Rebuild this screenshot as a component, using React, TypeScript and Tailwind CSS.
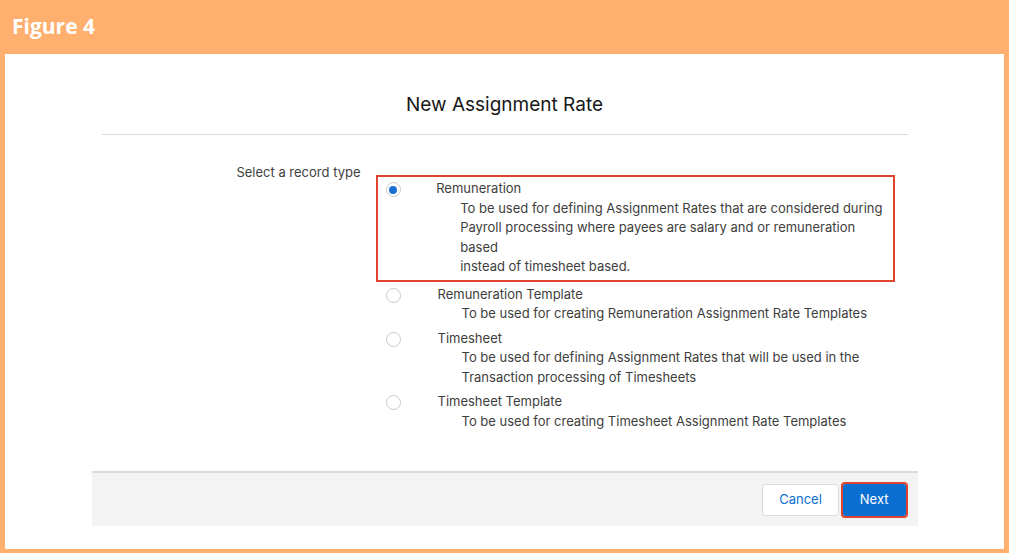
import React from "react";

const items = [
  { t: "Remuneration", d: ["To be used for defining Assignment Rates that are considered during", "Payroll processing where payees are salary and or remuneration based", "instead of timesheet based."], sel: true },
  { t: "Remuneration Template", d: ["To be used for creating Remuneration Assignment Rate Templates"] },
  { t: "Timesheet", d: ["To be used for defining Assignment Rates that will be used in the", "Transaction processing of Timesheets"] },
  { t: "Timesheet Template", d: ["To be used for creating Timesheet Assignment Rate Templates"] },
];

export default function App() {
  return (
    <div className="w-[1009px] h-[553px] bg-[#ffb06e] flex flex-col overflow-hidden" style={{ fontFamily: "Inter, 'Liberation Sans', sans-serif" }}>
      <div className="h-[54px] flex items-center pl-[12px] text-white text-[21px] font-bold" style={{ fontFamily: "'Open Sans', sans-serif" }}>Figure 4</div>
      <div className="mx-[5px] mb-[4px] flex-1 bg-white flex flex-col items-center">
        <div className="w-[806px] border-b border-[#dddbda] h-[81px] flex items-end justify-center pb-[15px] text-[19px] text-[#181818]">New Assignment Rate</div>
        <div className="w-[826px] flex-1 flex text-[13px] text-[#3e3e3c] leading-[19.5px]">
          <div className="w-[269px] text-right pt-[28px]">Select a record type</div>
          <div className="ml-[17px] pt-[44px] flex flex-col gap-[5px]">
            {items.map((it) => (
              <div key={it.t} className={`flex w-[515px] pr-2 ${it.sel ? "outline-2 outline-[#e0442c] -mt-[2px] pt-[2px] pb-[3px]" : ""}`}>
                <div className="w-[60px] pl-[8px] pt-[3px]">
                  <div className="w-[15px] h-[15px] rounded-full border border-[#c9c9c9] flex items-center justify-center">
                    {it.sel && <div className="w-[8px] h-[8px] rounded-full bg-[#1b6fd3]" />}
                  </div>
                </div>
                <div>
                  <div>{it.t}</div>
                  <div className="pl-[24px]">{it.d.map((l) => <div key={l}>{l}</div>)}</div>
                </div>
              </div>
            ))}
          </div>
        </div>
        <div className="w-[826px] h-[55px] mb-[23px] bg-[#f3f3f3] border-t-2 border-[#dddbda] flex items-center justify-end pr-[12px] gap-[4px] text-[13px]">
          <button className="h-[32px] px-[16px] bg-white border border-[#dddbda] rounded-[4px] text-[#0b6fd1]">Cancel</button>
          <button className="h-[32px] px-[17px] bg-[#0b6fd1] text-white rounded-[2px] outline-2 outline-[#e0442c]">Next</button>
        </div>
      </div>
    </div>
  );
}
